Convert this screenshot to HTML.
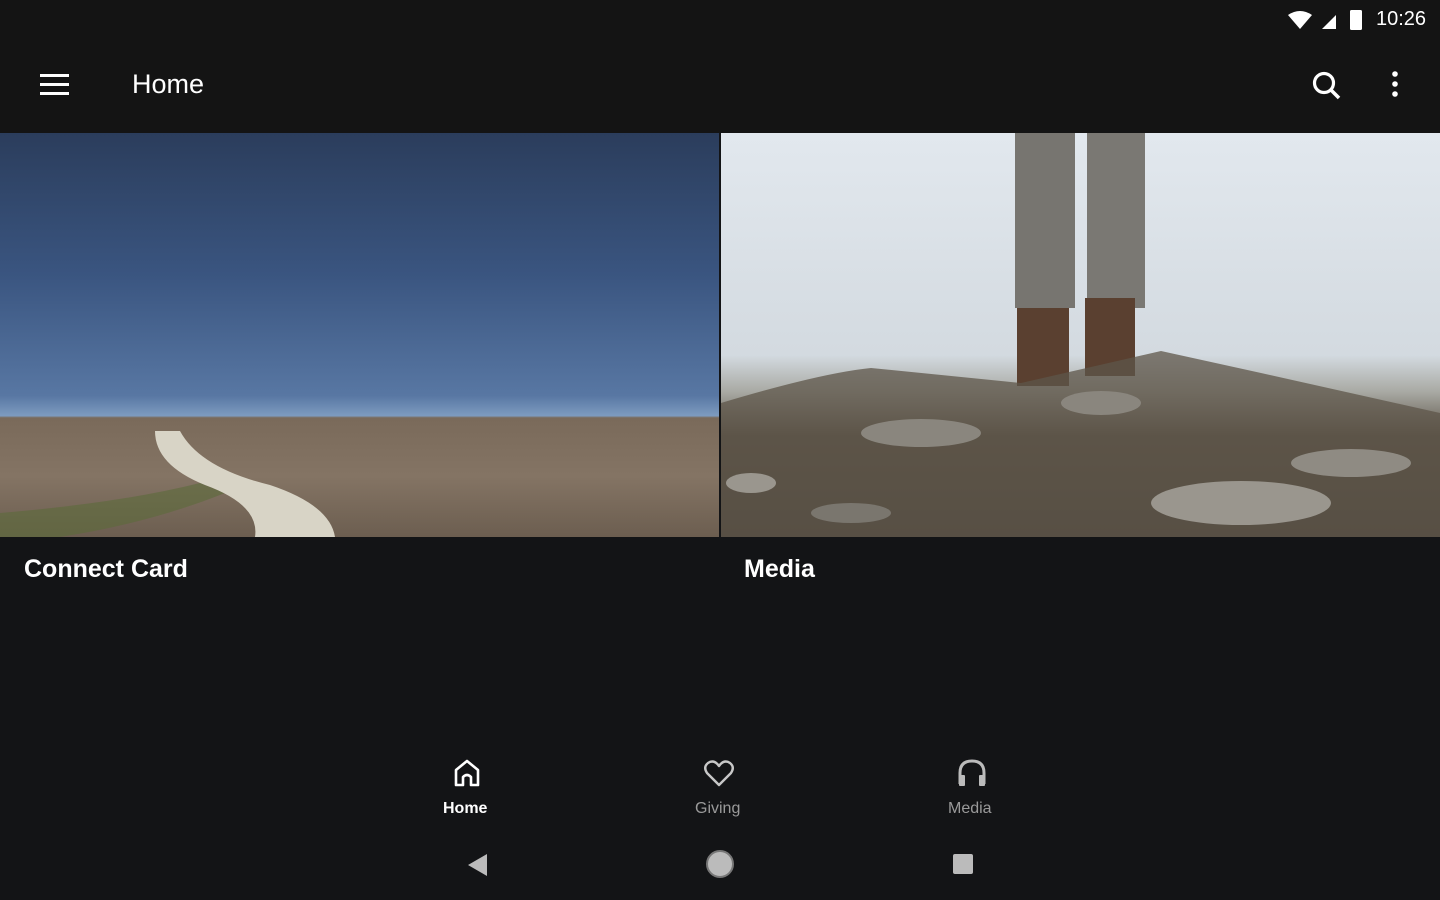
<!DOCTYPE html>
<html><head><style>
body{margin:0;width:1440px;height:900px;background:#131416;overflow:hidden;font-family:"Liberation Sans",sans-serif;position:relative}
.a{position:absolute}
</style></head><body>
<div class="a" style="left:0;top:0;width:1440px;height:133px;background:#141414"></div>
<div class="a" style="left:1376px;top:8px;color:#fff;font-size:20px">10:26</div>
<svg class="a" style="left:1286px;top:8px" width="84" height="24" viewBox="0 0 84 24">
<path d="M2 7 Q14 -1 26 7 L14 21 Z" fill="#fff"/>
<path d="M36 21 L50 7 L50 21 Z" fill="#fff"/>
<rect x="64" y="2" width="12" height="20" rx="1.5" fill="#fff"/>
</svg>
<svg class="a" style="left:40px;top:73px" width="30" height="24"><rect y="1" width="29" height="3" fill="#fff"/><rect y="10" width="29" height="3" fill="#fff"/><rect y="19" width="29" height="3" fill="#fff"/></svg>
<div class="a" style="left:132px;top:69px;color:#fff;font-size:27px">Home</div>
<svg class="a" style="left:1310px;top:69px" width="32" height="32"><circle cx="14" cy="14" r="9.5" stroke="#fff" stroke-width="3.2" fill="none"/><path d="M21 21 L29 29" stroke="#fff" stroke-width="3.5"/></svg>
<svg class="a" style="left:1388px;top:70px" width="14" height="30"><circle cx="7" cy="4" r="2.8" fill="#fff"/><circle cx="7" cy="14" r="2.8" fill="#fff"/><circle cx="7" cy="24" r="2.8" fill="#fff"/></svg>

<div class="a" style="left:0;top:133px;width:719px;height:404px;overflow:hidden;background:linear-gradient(180deg,#2b3d5c 0%,#3a5580 35%,#5877a3 65%,#7d9bbf 70%,#7a6a5a 70.5%,#847464 85%,#6c5e50 100%)">
<svg class="a" style="left:0;top:290px" width="719" height="114"><path d="M0 90 Q120 80 200 60 L225 70 Q150 100 60 114 L0 114Z" fill="#5b6a3a" opacity=".6"/><path d="M155 8 L180 8 Q200 45 270 62 Q330 82 335 114 L255 114 Q260 82 205 62 Q155 42 155 8Z" fill="#d8d4c6"/></svg>
</div>
<div class="a" style="left:721px;top:133px;width:719px;height:404px;overflow:hidden;background:linear-gradient(180deg,#e2e8ee 0%,#d3dae0 55%,#a9aaa4 64%,#5a5044 75%,#453e36 100%)">
<div class="a" style="left:294px;top:0;width:60px;height:175px;background:#777570"></div>
<div class="a" style="left:366px;top:0;width:58px;height:175px;background:#7a7873"></div>
<div class="a" style="left:296px;top:175px;width:52px;height:78px;background:#5a4030"></div>
<div class="a" style="left:364px;top:165px;width:50px;height:78px;background:#5a4030"></div>
<svg class="a" style="left:0;top:210px" width="719" height="194"><path d="M0 60 Q100 30 150 25 L300 40 L440 8 L540 30 L719 70 L719 194 L0 194Z" fill="#5e554a" opacity=".75"/><ellipse cx="520" cy="160" rx="90" ry="22" fill="#9a968e"/><ellipse cx="200" cy="90" rx="60" ry="14" fill="#8a867e"/><ellipse cx="630" cy="120" rx="60" ry="14" fill="#8f8b83"/><ellipse cx="30" cy="140" rx="25" ry="10" fill="#9a968e"/><ellipse cx="130" cy="170" rx="40" ry="10" fill="#7a766e"/><ellipse cx="380" cy="60" rx="40" ry="12" fill="#8a867e"/></svg>
</div>

<div class="a" style="left:24px;top:555px;color:#fff;font-size:25px;font-weight:bold">Connect Card</div>
<div class="a" style="left:744px;top:555px;color:#fff;font-size:25px;font-weight:bold">Media</div>

<svg class="a" style="left:452px;top:758px" width="30" height="30" viewBox="0 0 30 30"><path d="M4 27 V12 L15 3 L26 12 V27 H19 V19 Q15 15 11 19 V27 Z" fill="none" stroke="#fff" stroke-width="2.6" stroke-linejoin="round"/></svg>
<div class="a" style="left:443px;top:800px;color:#fff;font-size:16px;font-weight:bold">Home</div>
<svg class="a" style="left:703px;top:758px" width="32" height="30" viewBox="0 0 32 30"><path d="M16 27 L4 15 Q0 9 5 5 Q11 1 16 8 Q21 1 27 5 Q32 9 28 15 Z" fill="none" stroke="#c8c8c8" stroke-width="2.4" stroke-linejoin="round"/></svg>
<div class="a" style="left:695px;top:800px;color:#9a9a9a;font-size:16px">Giving</div>
<svg class="a" style="left:956px;top:758px" width="32" height="30" viewBox="0 0 32 30"><path d="M4 26 V15 Q4 3 16 3 Q28 3 28 15 V26" fill="none" stroke="#bbb" stroke-width="3"/><rect x="3" y="17" width="6" height="11" rx="1" fill="#bbb"/><rect x="23" y="17" width="6" height="11" rx="1" fill="#bbb"/></svg>
<div class="a" style="left:948px;top:800px;color:#9a9a9a;font-size:16px">Media</div>

<svg class="a" style="left:466px;top:853px" width="22" height="24"><path d="M21 1 L21 23 L2 12Z" fill="#bbb"/></svg>
<div class="a" style="left:706px;top:850px;width:24px;height:24px;border-radius:50%;background:#bbb;border:2px solid #777"></div>
<div class="a" style="left:953px;top:854px;width:20px;height:20px;background:#bbb;border-radius:2px"></div>
</body></html>
